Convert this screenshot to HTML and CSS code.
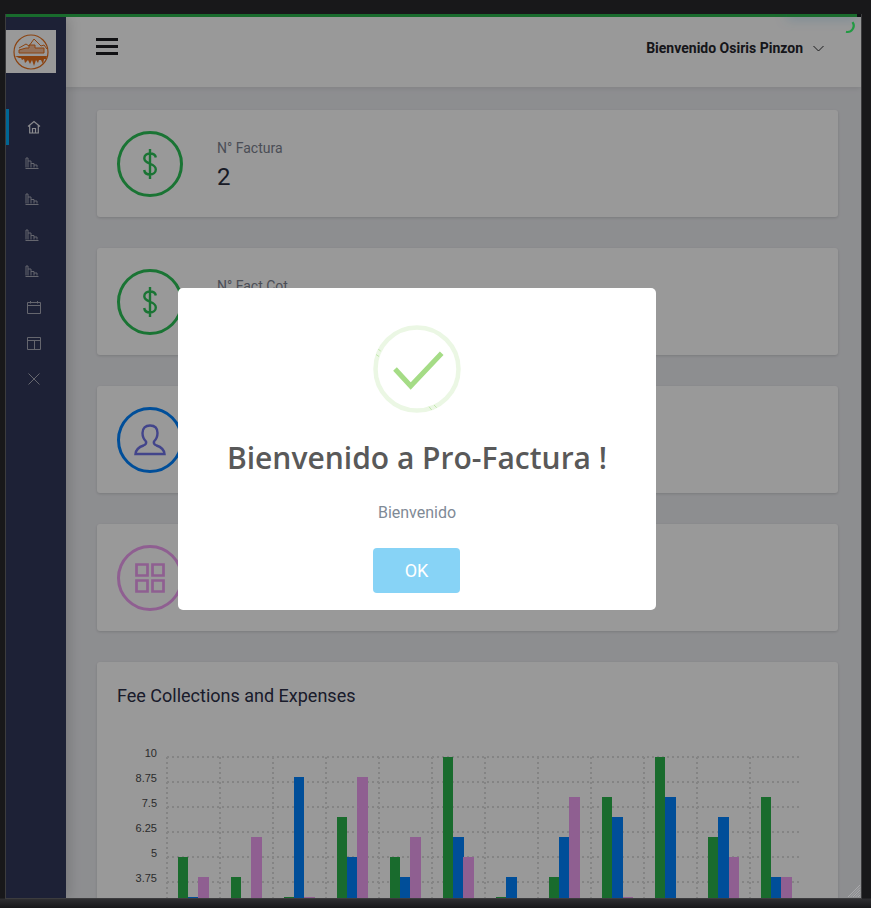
FILE: index.html
```html
<!DOCTYPE html>
<html lang="es">
<head>
<meta charset="utf-8">
<title>Pro-Factura</title>
<link rel="stylesheet" href="styles.css">
</head>
<body>
<div class="window">
  <div class="progress"></div>
  <div class="app">
    <aside class="sidebar">
      <div class="logo">
        <svg width="38" height="38" viewBox="0 0 38 38" fill="none" stroke="#e8701c">
          <circle cx="19" cy="19" r="17" stroke-width="1.200"/>
          <path d="M7 15l7-4 3 2 5-7 7 7 3-1 3 4" stroke-width="1"/>
          <path d="M7 17l7-2h3v-3h6v3h9v5H7z" fill="#e8701c" fill-opacity=".45" stroke-width="1"/>
          <path d="M3 23h32l-1 3-2 0-1 5-2-4-2 0-1 3-2-3-2 6-2-6-2 4-2-4-3 3-1-4-2 1-1-2-2 0z" fill="#e8701c" stroke="none"/>
        </svg>
      </div>
      <nav class="nav">
        <a class="nav-item active">
          <svg width="14" height="14" viewBox="0 0 14 14" fill="none" stroke="#e8e8ee" stroke-width="1.200"><path d="M1 6.500L7 1.500l6 5M2.700 5.500V13h8.600V5.500M5.500 13V8.500h3V13"/></svg>
        </a>
        <a class="nav-item"><svg class="chart-icon" width="14" height="14" viewBox="2.500 0 14 14" fill="none" stroke="#a8aab8"><path d="M1.500 11.500V2h2v9.500M3.500 5h3v6.500M6.500 7.500h3v4M9.500 9h3v2.500M1 12.500h13"/></svg></a>
        <a class="nav-item"><svg class="chart-icon" width="14" height="14" viewBox="2.500 0 14 14" fill="none" stroke="#a8aab8"><path d="M1.500 11.500V2h2v9.500M3.500 5h3v6.500M6.500 7.500h3v4M9.500 9h3v2.500M1 12.500h13"/></svg></a>
        <a class="nav-item"><svg class="chart-icon" width="14" height="14" viewBox="2.500 0 14 14" fill="none" stroke="#a8aab8"><path d="M1.500 11.500V2h2v9.500M3.500 5h3v6.500M6.500 7.500h3v4M9.500 9h3v2.500M1 12.500h13"/></svg></a>
        <a class="nav-item"><svg class="chart-icon" width="14" height="14" viewBox="2.500 0 14 14" fill="none" stroke="#a8aab8"><path d="M1.500 11.500V2h2v9.500M3.500 5h3v6.500M6.500 7.500h3v4M9.500 9h3v2.500M1 12.500h13"/></svg></a>
        <a class="nav-item"><svg width="14" height="14" viewBox="0 0 14 14" fill="none" stroke="#a8aab8"><path d="M.5 2.500h13v11H.5zM.5 5.500h13M3.500 1v2.500M10.500 1v2.500"/></svg></a>
        <a class="nav-item"><svg width="14" height="14" viewBox="0 0 14 14" fill="none" stroke="#a8aab8"><path d="M.5 1.500h13v12H.5zM.5 4.500h13M7.500 4.500v9"/></svg></a>
        <a class="nav-item"><svg width="14" height="14" viewBox="0 0 14 14" fill="none" stroke="#a8aab8"><path d="M1.500 1.500l11 11M12.500 1.500l-11 11"/></svg></a>
      </nav>
    </aside>
    <div class="main">
      <header class="topbar">
        <button class="burger" aria-label="Menu"><span></span><span></span><span></span></button>
        <div class="user">
          <span>Bienvenido Osiris Pinzon</span>
          <svg width="11" height="7" viewBox="0 0 11 7" fill="none" stroke="#2a2a2e"><path d="M.5 1l5 5 5-5"/></svg>
        </div>
      </header>
      <main class="content">
        <section class="card stat">
          <div class="ring ring-green">
            <svg width="14" height="30" viewBox="0 0 14 30" fill="none" stroke="#2cc257" stroke-width="2.400"><path d="M7 0v30M12.800 8.500C12.400 5.800 10 4.500 7 4.500c-3.200 0-5.700 1.700-5.700 4.800C1.300 16 12.800 13.500 12.800 20.500c0 3-2.600 5-5.800 5s-5.400-1.500-5.800-4.500"/></svg>
          </div>
          <div class="stat-text"><div class="stat-label">N° Factura</div><div class="stat-value">2</div></div>
        </section>
        <section class="card stat">
          <div class="ring ring-green">
            <svg width="14" height="30" viewBox="0 0 14 30" fill="none" stroke="#2cc257" stroke-width="2.400"><path d="M7 0v30M12.800 8.500C12.400 5.800 10 4.500 7 4.500c-3.200 0-5.700 1.700-5.700 4.800C1.300 16 12.800 13.500 12.800 20.500c0 3-2.600 5-5.800 5s-5.400-1.500-5.800-4.500"/></svg>
          </div>
          <div class="stat-text"><div class="stat-label">N° Fact Cot</div></div>
        </section>
        <section class="card stat">
          <div class="ring ring-blue">
            <svg width="32" height="32" viewBox="0 0 32 32" fill="none" stroke="#6f73e8" stroke-width="2.400"><path d="M1.500 30c.5-5 3.500-7 8-8.500 2.500-1 3-2.500 2.500-4-2-2-3.500-5-3.500-8.500C8.500 4 11.500 1.500 16 1.500S23.500 4 23.500 9c0 3.500-1.500 6.500-3.500 8.500-.5 1.500 0 3 2.500 4 4.500 1.500 7.500 3.500 8 8.500z"/></svg>
          </div>
        </section>
        <section class="card stat">
          <div class="ring ring-purple">
            <svg width="30" height="30" viewBox="0 0 30 30" fill="none" stroke="#ee9ef2" stroke-width="2.700"><path d="M1.500 1.500h11v11h-11zM17.500 1.500h11v11h-11zM1.500 17.500h11v11h-11zM17.500 17.500h11v11h-11z"/></svg>
          </div>
        </section>
        <section class="card chart-card">
          <h2 class="chart-title">Fee Collections and Expenses</h2>
          <svg class="chart" width="741" height="211" viewBox="97 731 741 211">
            <g class="grid">
              <path d="M167 757H802M167 782H802M167 807H802M167 832H802M167 857H802M167 882H802"/>
              <path d="M167 757V942M220 757V942M273 757V942M326 757V942M379 757V942M432 757V942M485 757V942M538 757V942M591 757V942M644 757V942M697 757V942M750 757V942"/>
            </g>
            <g class="ticks">
              <text x="157" y="757">10</text><text x="157" y="782">8.75</text><text x="157" y="807">7.5</text>
              <text x="157" y="832">6.25</text><text x="157" y="857">5</text><text x="157" y="882">3.75</text>
            </g>
            <g class="bars-g">
              <rect x="178" y="857" width="10" height="60"/><rect x="231" y="877" width="10" height="40"/>
              <rect x="284" y="897" width="10" height="20"/><rect x="337" y="817" width="10" height="100"/>
              <rect x="390" y="857" width="10" height="60"/><rect x="443" y="757" width="10" height="160"/>
              <rect x="496" y="897" width="10" height="20"/><rect x="549" y="877" width="10" height="40"/>
              <rect x="602" y="797" width="10" height="120"/><rect x="655" y="757" width="10" height="160"/>
              <rect x="708" y="837" width="10" height="80"/><rect x="761" y="797" width="10" height="120"/>
            </g>
            <g class="bars-b">
              <rect x="188" y="897" width="10" height="20"/><rect x="294" y="777" width="10" height="140"/>
              <rect x="347" y="857" width="10" height="60"/><rect x="400" y="877" width="10" height="40"/>
              <rect x="453" y="837" width="11" height="80"/><rect x="506" y="877" width="11" height="40"/>
              <rect x="559" y="837" width="10" height="80"/><rect x="612" y="817" width="11" height="100"/>
              <rect x="665" y="797" width="11" height="120"/><rect x="718" y="817" width="11" height="100"/>
              <rect x="771" y="877" width="10" height="40"/>
            </g>
            <g class="bars-p">
              <rect x="198" y="877" width="11" height="40"/><rect x="251" y="837" width="11" height="80"/>
              <rect x="304" y="897" width="11" height="20"/><rect x="357" y="777" width="11" height="140"/>
              <rect x="410" y="837" width="11" height="80"/><rect x="463" y="857" width="11" height="60"/>
              <rect x="569" y="797" width="11" height="120"/><rect x="623" y="897" width="10" height="20"/>
              <rect x="729" y="857" width="10" height="60"/><rect x="781" y="877" width="11" height="40"/>
            </g>
          </svg>
        </section>
      </main>
    </div>
  </div>
  <div class="backdrop"></div>
  <svg class="spinner" width="14" height="14" viewBox="0 0 14 14" fill="none" stroke="#219a42" stroke-width="2.200"><path d="M8.500 1.200A6.200 6.200 0 0 1 2 10.800"/></svg>
  <svg class="resize" width="14" height="14" viewBox="0 0 14 14" stroke="#b5b5b8" fill="none"><path d="M1 13L13 1M3.500 13L13 3.500M6 13l7-7M8.500 13l4.500-4.500M11 13l2-2"/></svg>
</div>
<div class="dialog-layer">
  <div class="dialog">
    <svg class="check" width="88" height="88" viewBox="0 0 88 88" fill="none">
      <circle cx="44" cy="44" r="41.500" stroke="#ebf7e4" stroke-width="4.500"/>
      <path d="M22 44L37.700 61 68.700 28.300" stroke="#a5dc86" stroke-width="5"/>
      <path class="tick" d="M5.300 24.300l2.400 1.700M3 29.500l3 2M56 81.700l2.700 3.300M61 80l2.700 2.700"/>
    </svg>
    <h1 class="dialog-title">Bienvenido a Pro-Factura !</h1>
    <p class="dialog-text">Bienvenido</p>
    <button class="dialog-btn">OK</button>
  </div>
</div>
</body>
</html>
```
FILE: styles.css
```css
* { box-sizing: border-box; }
html, body { margin: 0; height: 100%; }
body {
  background: linear-gradient(to bottom, #18181a 0, #18181a 898px, #2e2e31 899px, #18181a 908px);
  height: 908px;
  overflow: hidden;
  padding: 14px 9px 9px 5px;
  font-family: Roboto, "Liberation Sans", sans-serif;
  position: relative;
}
.window {
  position: relative;
  width: 857px;
  height: 885px;
  overflow: hidden;
  border-left: 1px solid #3c3c3e;
  border-right: 1px solid #3c3c3e;
  border-bottom: 1px solid #3c3c3e;
  display: flex;
  flex-direction: column;
}
.progress {
  height: 3px; flex: none; background: #2bb24b; margin-right: 4px;
  position: relative; z-index: 2;
}
.progress::after {
  content: ""; position: absolute; right: 0; top: 0; width: 70px; height: 3px;
  box-shadow: 0 0 12px rgba(60, 170, 230, .7);
}
.app { flex: 1; display: flex; min-height: 0; }
.sidebar {
  width: 60px; flex: none; background: #31375a; padding-top: 13px;
  position: relative; z-index: 1;
  box-shadow: 3px 0 12px rgba(0,0,0,.16);
}
.logo {
  width: 50px; height: 43px; background: #fff;
  display: flex; align-items: center; justify-content: center;
}
.nav { margin-top: 36px; display: flex; flex-direction: column; }
.nav-item {
  height: 36px; display: flex; align-items: center; justify-content: center;
  padding-right: 8px;
  border-left: 3px solid transparent;
}
.nav-item.active { border-left-color: #00aaf5; }
.chart-icon { overflow: visible; }
.main { flex: 1; min-width: 0; display: flex; flex-direction: column; background: #ecedf1; }
.topbar {
  height: 70px; flex: none; background: #fff;
  display: flex; align-items: center; justify-content: space-between;
  padding: 0 37px 11px 30px;
  box-shadow: 0 1px 6px rgba(0,0,0,.1);
}
.burger {
  width: 22px; height: 17px; border: 0; padding: 0; background: none;
  display: flex; flex-direction: column; justify-content: space-between;
}
.burger span { height: 3px; background: #1d1d21; display: block; }
.user { display: flex; align-items: center; gap: 10px; font-size: 14px; font-weight: 700; color: #25252c; padding-top: 3px; }
.content { flex: 1; min-height: 0; overflow: hidden; padding: 23px 23px 0 31px; display: flex; flex-direction: column; gap: 31px; }
.card { background: #fff; flex: none; border-radius: 3px; box-shadow: 0 1px 3px rgba(0,0,0,.14); }
.stat { height: 107px; display: flex; align-items: center; padding-left: 20px; gap: 34px; }
.ring {
  width: 66px; height: 66px; border-radius: 50%; border: 3px solid;
  display: flex; align-items: center; justify-content: center; flex: none;
}
.ring-green { border-color: #2cc257; }
.ring-blue { border-color: #0083ff; }
.ring-purple { border-color: #ee9ef2; }
.stat-text { align-self: flex-start; padding-top: 29px; }
.stat-label { font-size: 14px; color: #7c8290; line-height: 18px; }
.stat-value { font-size: 24px; color: #2a2d3e; line-height: 30px; margin-top: 5px; }
.chart-card { height: 280px; }
.chart-title { margin: 0; padding: 22px 20px 0; font-size: 18px; font-weight: 400; line-height: 24px; color: #2c2f48; }
.chart { display: block; margin-top: 23px; }
.grid path { stroke: #dcdcdc; stroke-width: 2; stroke-dasharray: 2 3; fill: none; }
.ticks text { font: 11px "Liberation Sans", sans-serif; fill: #4a4a4a; text-anchor: end; }
.bars-g rect { fill: #2bb24b; }
.bars-b rect { fill: #0083ff; }
.bars-p rect { fill: #ee9ef2; }
.backdrop { position: absolute; inset: 0; background: rgba(0,0,0,.4); z-index: 2; }
.spinner { position: absolute; right: 3px; top: 7px; z-index: 3; }
.resize { position: absolute; right: 0; bottom: 0; opacity: .7; z-index: 3; }
.dialog-layer { position: absolute; left: 178px; top: 288px; z-index: 4; }
.dialog {
  width: 478px; height: 322px; background: #fff; border-radius: 5px;
  display: flex; flex-direction: column; align-items: center;
  padding-top: 37px;
}
.check { flex: none; }
.tick { stroke: #a5dc86; stroke-width: .6; }
.dialog-title { margin: 25px 0 0; font: 600 30px/40px "Open Sans", sans-serif; color: #595959; }
.dialog-text { margin: 23px 0 0; font-size: 16px; line-height: 24px; color: #7f8a96; font-weight: 400; }
.dialog-btn {
  margin: 23px 1px 0 0; width: 87px; height: 45px; border: 0; border-radius: 4px;
  background: #87d3f6; color: #fff; font: 400 18px Roboto, sans-serif;
}
```
